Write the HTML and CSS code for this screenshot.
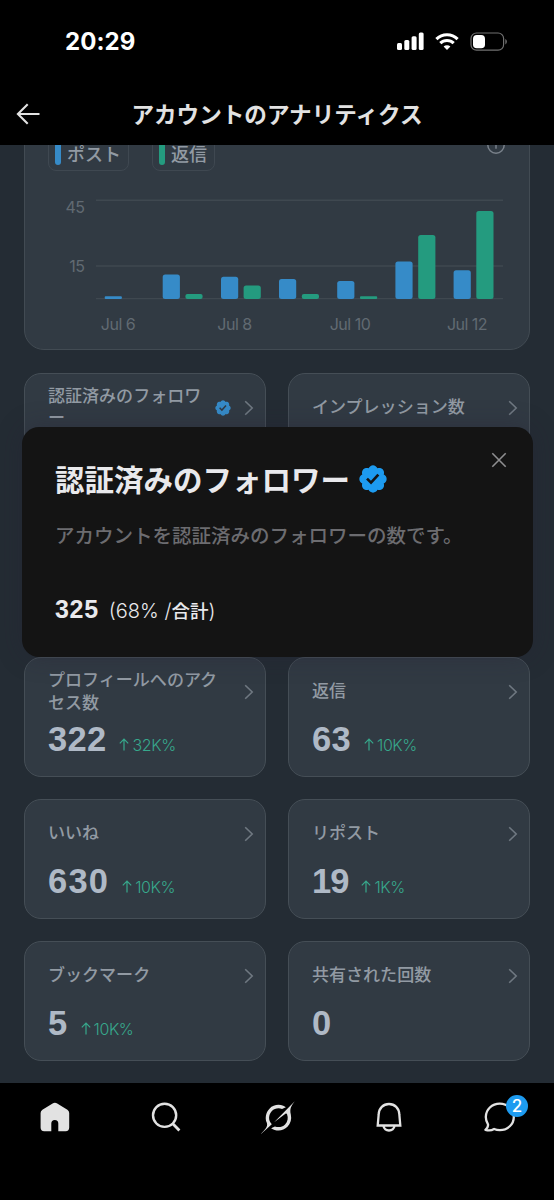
FILE: index.html
```
<!DOCTYPE html>
<html lang="ja">
<head>
<meta charset="utf-8">
<title>アカウントのアナリティクス</title>
<link rel="stylesheet" href="styles.css">
</head>
<body>
<svg class="defs" width="0" height="0">
  <symbol id="verified" viewBox="0 0 22 22"><path d="M20.396 11c-.018-.646-.215-1.275-.57-1.816-.354-.54-.852-.972-1.438-1.246.223-.607.27-1.264.14-1.897-.131-.634-.437-1.218-.882-1.687-.47-.445-1.053-.75-1.687-.882-.633-.13-1.29-.083-1.897.14-.273-.587-.704-1.086-1.245-1.44S11.647 1.62 11 1.604c-.646.017-1.273.213-1.813.568s-.969.854-1.24 1.44c-.608-.223-1.267-.272-1.902-.14-.635.13-1.22.436-1.69.882-.445.47-.749 1.055-.878 1.688-.13.633-.08 1.29.144 1.896-.587.274-1.087.705-1.443 1.245-.356.54-.555 1.17-.574 1.817.02.647.218 1.276.574 1.817.356.54.856.972 1.443 1.245-.224.606-.274 1.263-.144 1.896.13.634.433 1.218.877 1.688.47.443 1.054.747 1.687.878.633.132 1.29.084 1.897-.136.274.586.705 1.084 1.246 1.439.54.354 1.17.551 1.816.569.647-.016 1.276-.213 1.817-.567s.972-.854 1.245-1.44c.604.239 1.266.296 1.903.164.636-.132 1.22-.447 1.68-.907.46-.46.776-1.044.908-1.681s.075-1.299-.165-1.903c.586-.274 1.084-.705 1.439-1.246.354-.54.551-1.17.569-1.816zM9.662 14.85l-3.429-3.428 1.293-1.302 2.072 2.072 4.4-4.794 1.347 1.246z"/></symbol>
  <symbol id="chevron" viewBox="0 0 10 16"><path d="M1.2 1.2 8.2 8l-7 6.8" fill="none" stroke="currentColor" stroke-width="1.6"/></symbol>
  <symbol id="up" viewBox="0 0 10 13"><path d="M5 12.5V1.2M.8 5.4 5 1.2l4.2 4.2" fill="none" stroke="currentColor" stroke-width="1.2"/></symbol>
</svg>
<div class="phone">
  <div class="status">
    <span class="clock">20:29</span>
    <div class="status-icons">
      <svg width="28" height="19" viewBox="0 0 28 19" fill="#fff"><rect x="0" y="11" width="5" height="7" rx="1.5"/><rect x="7.3" y="8" width="5" height="10" rx="1.5"/><rect x="14.6" y="4.3" width="5" height="13.7" rx="1.5"/><rect x="21.8" y=".4" width="4.8" height="17.6" rx="1.5"/></svg>
      <svg class="wifi" width="24" height="19" viewBox="0 0 24 19" fill="none" stroke="#fff" stroke-width="3.1"><path d="M1.4 7.1a15 15 0 0 1 21.2 0M5.3 11.2a9.6 9.6 0 0 1 13.4 0"/><path d="M12 18 8.6 14.5a4.9 4.9 0 0 1 6.8 0z" fill="#fff" stroke="none"/></svg>
      <svg class="battery" width="38" height="20" viewBox="0 0 38 20"><rect x="1" y="1" width="32.6" height="17.2" rx="5.5" fill="none" stroke="#707070" stroke-width="1.2"/><rect x="3" y="3" width="12" height="13.2" rx="3.8" fill="#fff"/><path d="M35.3 7v5.4q1.6-.8 1.6-2.7T35.3 7z" fill="#707070"/></svg>
    </div>
  </div>
  <header class="header">
    <svg class="back" width="24" height="22" viewBox="0 0 24 22" fill="none" stroke="#e2e2e2" stroke-width="2.1"><path d="M23.500 11H2M11.700 1.200 1.900 11l9.800 9.800"/></svg>
    <h1>アカウントのアナリティクス</h1>
  </header>
  <main class="content">
    <section class="chart-card">
      <div class="legend">
        <span class="chip"><i class="key blue"></i>ポスト</span>
        <span class="chip"><i class="key green"></i>返信</span>
        <svg class="info" width="20" height="20" viewBox="0 0 20 20" fill="none" stroke="#79818a" stroke-width="1.5"><circle cx="10" cy="10" r="8.2"/><path d="M10 8.5v5.3"/></svg>
      </div>
      <svg class="chart" width="456" height="150" viewBox="48 190 456 150">
        <path class="grid" d="M96 200.2h407M96 266h407M96 298.6h407"/>
        <g class="axis">
          <text x="84.5" y="213" text-anchor="end">45</text><text x="84.5" y="272" text-anchor="end">15</text>
          <text x="118" y="330" text-anchor="middle">Jul 6</text><text x="234.5" y="330" text-anchor="middle">Jul 8</text><text x="350" y="330" text-anchor="middle">Jul 10</text><text x="467" y="330" text-anchor="middle">Jul 12</text>
        </g>
        <g class="bars-blue">
          <rect x="104.7" y="296.2" width="17.2" height="2.8" rx="1"/><rect x="162.7" y="274.5" width="17.2" height="24.5" rx="2.500"/><rect x="221" y="276.7" width="17.2" height="22.3" rx="2.500"/><rect x="279" y="279" width="17.2" height="20" rx="2.500"/><rect x="337.2" y="281" width="17.2" height="18" rx="2.500"/><rect x="395.4" y="261.4" width="17.2" height="37.6" rx="2.500"/><rect x="453.6" y="270.2" width="17.2" height="28.8" rx="2.500"/>
        </g>
        <g class="bars-green">
          <rect x="185.4" y="294" width="17.2" height="5" rx="2"/><rect x="243.6" y="285.4" width="17.2" height="13.6" rx="2.500"/><rect x="301.8" y="294" width="17.2" height="5" rx="2"/><rect x="360" y="296.2" width="17.2" height="2.8" rx="1"/><rect x="418.2" y="235" width="17.2" height="64" rx="2.500"/><rect x="476.3" y="211" width="17.2" height="88" rx="2.500"/>
        </g>
      </svg>
    </section>
    <section class="cards">
      <article class="card"><div class="top"><span class="label short">認証済みのフォロワー</span><svg class="tick"><use href="#verified"/></svg><svg class="chev"><use href="#chevron"/></svg></div></article>
      <article class="card"><div class="top"><span class="label">インプレッション数</span><svg class="chev"><use href="#chevron"/></svg></div></article>
      <article class="card"></article>
      <article class="card"></article>
      <article class="card"><div class="top"><span class="label">プロフィールへのアクセス数</span><svg class="chev"><use href="#chevron"/></svg></div><div class="value"><b>322</b><svg class="up"><use href="#up"/></svg><span>32K%</span></div></article>
      <article class="card"><div class="top"><span class="label">返信</span><svg class="chev"><use href="#chevron"/></svg></div><div class="value"><b>63</b><svg class="up"><use href="#up"/></svg><span>10K%</span></div></article>
      <article class="card"><div class="top"><span class="label">いいね</span><svg class="chev"><use href="#chevron"/></svg></div><div class="value"><b class="wide">630</b><svg class="up"><use href="#up"/></svg><span>10K%</span></div></article>
      <article class="card"><div class="top"><span class="label">リポスト</span><svg class="chev"><use href="#chevron"/></svg></div><div class="value"><b class="narrow">19</b><svg class="up"><use href="#up"/></svg><span>1K%</span></div></article>
      <article class="card"><div class="top"><span class="label">ブックマーク</span><svg class="chev"><use href="#chevron"/></svg></div><div class="value"><b>5</b><svg class="up"><use href="#up"/></svg><span>10K%</span></div></article>
      <article class="card"><div class="top"><span class="label">共有された回数</span><svg class="chev"><use href="#chevron"/></svg></div><div class="value"><b>0</b></div></article>
    </section>
    <div class="modal">
      <svg class="close" width="16" height="16" viewBox="0 0 16 16" fill="none" stroke="#8e8e90" stroke-width="1.6"><path d="m1.3 1.3 13.4 13.4M14.7 1.3 1.3 14.7"/></svg>
      <h2>認証済みのフォロワー<svg class="badge"><use href="#verified"/></svg></h2>
      <p class="desc">アカウントを認証済みのフォロワーの数です。</p>
      <p class="total"><b>325</b><span>(68% /<em>合計</em>)</span></p>
    </div>
  </main>
  <nav class="nav">
    <div class="tab"><svg width="30" height="30" viewBox="0 0 30 30"><path d="M12.600 1.500 2.400 7.800Q.6 9 .6 11v14.600q0 3.600 3.600 3.600h7.100V21.500q0-3.500 3.500-3.500t3.500 3.500v7.700h7.300q3.600 0 3.600-3.600V11q0-2-1.800-3.200L17.200 1.500q-2.300-1.300-4.600 0z" fill="#e2e2e2"/></svg></div>
    <div class="tab"><svg width="30" height="30" viewBox="0 0 30 30" fill="none" stroke="#e2e2e2" stroke-width="2.400"><circle cx="13.600" cy="13.300" r="11.600"/><path d="m21.600 21.500 6.800 7" stroke-width="2.800"/></svg></div>
    <div class="tab"><svg width="34" height="33" viewBox="0 0 33 32"><path fill="#e2e2e2" d="M12.745 20.540l10.970-8.190c.539-.4 1.307-.244 1.564.38 1.349 3.288.746 7.241-1.938 9.955-2.683 2.714-6.417 3.310-9.830 1.954l-3.728 1.745c5.347 3.697 11.840 2.782 15.898-1.324 3.219-3.255 4.216-7.692 3.284-11.693l.008.009c-1.351-5.878.332-8.227 3.782-13.031L33 0l-4.540 4.590v-.014L12.743 20.544m-2.263 1.987c-3.837-3.707-3.175-9.446.1-12.755 2.420-2.449 6.388-3.448 9.852-1.979l3.720-1.737c-.670-.490-1.530-1.017-2.515-1.387-4.455-1.854-9.789-.931-13.410 2.728-3.483 3.523-4.579 8.940-2.697 13.561 1.405 3.454-.899 5.898-3.220 8.364C1.490 30.200.666 31.074 0 32l10.478-9.466"/></svg></div>
    <div class="tab"><svg width="30" height="30" viewBox="0 0 30 30" fill="none" stroke="#e2e2e2" stroke-width="2.300"><path d="M4.700 12.200C5 6.300 9.200 2 15 2s10 4.300 10.300 10.200l1 11.300H3.700zM9.300 23.800c.8 3 3 4.700 5.700 4.700s4.900-1.700 5.700-4.700"/></svg></div>
    <div class="tab chat"><svg width="32" height="30" viewBox="0 0 32 30" fill="none" stroke="#e2e2e2" stroke-width="2.300" stroke-linejoin="round"><path d="M15.800 1.600C8 1.600 1.800 7.500 1.800 15c0 2.800.9 5.200 2.200 7.300.3 1.900-.4 3.800-2.600 5.500 3.200.9 6.300.6 8.700-.8 1.700.7 3.700 1.100 5.700 1.100 8 0 14-5.800 14-13.100S23.800 1.600 15.800 1.600z"/></svg><span class="count">2</span></div>
  </nav>
</div>
</body>
</html>
```

FILE: styles.css
```
* { box-sizing: border-box; margin: 0; padding: 0; }
body { background: #000; font-family: Inter, "Noto Sans CJK JP", sans-serif; }
.defs { position: absolute; }
svg { display: block; flex: none; }
.phone { width: 554px; height: 1200px; display: flex; flex-direction: column; background: #000; overflow: hidden; }

.status { height: 83px; display: flex; justify-content: space-between; padding: 0 46px 0 65px; }
.clock { font-size: 24px; font-weight: 700; line-height: 30px; color: #fff; margin-top: 27px; letter-spacing: .1px; }
.status-icons { display: flex; margin-top: 32px; height: 20px; }
.wifi { margin-left: 10px; }
.battery { margin-left: 11px; }

.header { height: 62px; display: flex; align-items: center; padding-left: 16px; }
.header h1 { flex: 1; margin: 0 40px 0 0; text-align: center; color: #e2e2e2; font-size: 22.600px; font-weight: 700; line-height: 32px; font-family: "Noto Sans CJK JP", sans-serif; white-space: nowrap; }

.content { height: 938px; flex: none; overflow: hidden; position: relative; background: #242c34; padding: 0 24px; }
.chart-card { height: 265px; margin-top: -60px; border: 1.5px solid #424b53; border-radius: 20px; background: #313a43; padding: 49px 23px 0; }
.legend { display: flex; height: 36px; gap: 23px; }
.chip { display: flex; align-items: center; height: 36px; padding: 0 7px 0 6px; border: 1.5px solid #3f4851; border-radius: 8px; font: 500 18px/34px "Noto Sans CJK JP", sans-serif; color: #929aa3; }
.key { width: 6px; height: 24px; border-radius: 3px; margin-right: 6px; }
.blue { background: #368bc8; }
.green { background: #249b7f; }
.info { margin: 0 0 0 auto; }
.chart { margin-top: 19px; }
.grid { stroke: #3f4850; stroke-width: 1.4; fill: none; }
.axis { fill: #616a72; font: 400 16px Inter, sans-serif; letter-spacing: -.5px; }
.bars-blue { fill: #368bc8; }
.bars-green { fill: #249b7f; }

.cards { display: grid; grid-template-columns: 242px 242px; grid-auto-rows: 120px; column-gap: 22px; row-gap: 22px; margin-top: 23px; }
.card { border: 1.5px solid #454e56; border-radius: 17px; background: #313a43; padding: 11px 11px 0 23px; }
.top { display: flex; align-items: center; height: 46px; color: #929aa3; }
.label { width: 173px; margin-top: -3px; font: 500 17.050px/22.500px "Noto Sans CJK JP", sans-serif; word-break: break-all; line-break: anywhere; }
.label.short { width: 160px; margin-top: -4px; }
.tick { width: 18px; height: 18px; fill: #368bc8; margin-left: 6px; }
.chev { width: 10px; height: 16px; color: #6f7881; margin-left: auto; }
.value { display: flex; align-items: baseline; height: 40px; margin-top: 4px; color: #afb9c6; }
.value b { font: 700 34.500px/40px "Liberation Sans", sans-serif; letter-spacing: .3px; }
.value .wide { letter-spacing: 1.200px; }
.value .narrow { letter-spacing: -1px; }
.value .up { width: 10px; height: 13px; color: #37a88c; margin-left: 13px; align-self: flex-start; margin-top: 19px; }
.value span { color: #37a88c; font-size: 16px; font-weight: 300; letter-spacing: -.4px; margin-left: 3px; }

.modal { position: absolute; left: 21.500px; top: 281.500px; width: 511.500px; height: 230.500px; border-radius: 17px; background: #141414; padding: 0 33.500px; box-shadow: 0 0 24px rgba(36,32,52,.35); }
.close { position: absolute; right: 26px; top: 25px; }
.modal h2 { display: flex; align-items: center; height: 44px; margin-top: 29px; font: 700 29.500px/44px "Noto Sans CJK JP", sans-serif; color: #e9e9ec; white-space: nowrap; }
.badge { width: 32px; height: 32px; fill: #1d9bf0; margin: 3px 0 0 7px; }
.desc { font: 500 19.500px/30px "Noto Sans CJK JP", sans-serif; color: #6c6c70; margin-top: 20px; white-space: nowrap; }
.total { display: flex; align-items: baseline; margin-top: 44px; line-height: 30px; color: #e9e9ec; }
.total b { font: 700 25px/30px "Liberation Sans", sans-serif; letter-spacing: .7px; }
.total span { font-size: 20px; font-weight: 300; margin-left: 10px; letter-spacing: 0; }
.total em { font: 500 18.500px/30px "Noto Sans CJK JP", sans-serif; }

.nav { flex: 1; display: flex; justify-content: space-between; padding: 19px 37px 0 38px; height: 117px; }
.tab { width: 34px; height: 30px; display: flex; justify-content: center; align-items: center; }
.chat { position: relative; }
.count { position: absolute; left: 23px; top: -7px; width: 22px; height: 22px; border-radius: 50%; background: #1d9bf0; color: #fff; font: 500 17px/22px Inter, sans-serif; text-align: center; }
```
